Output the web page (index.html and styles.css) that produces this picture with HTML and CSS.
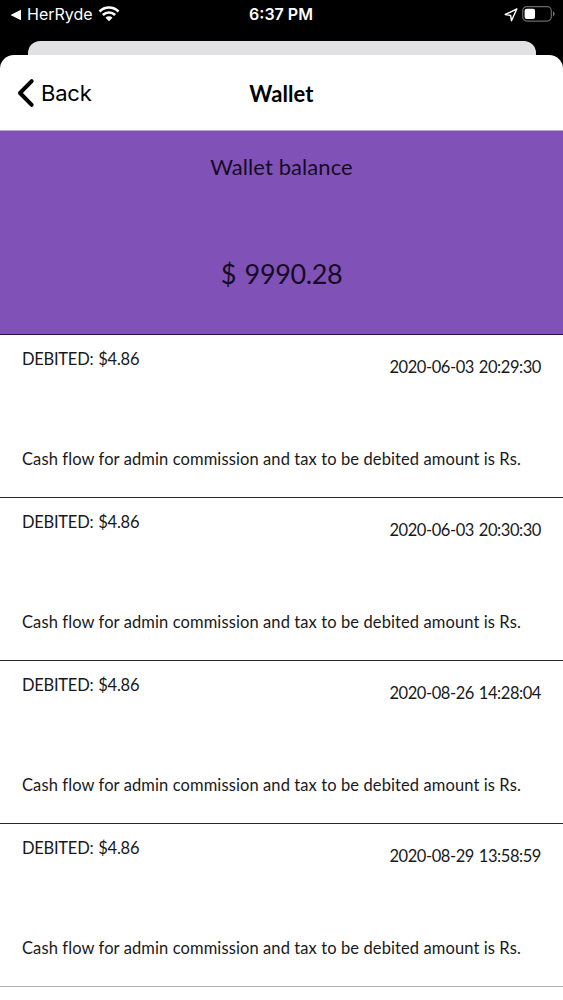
FILE: index.html
```html
<!DOCTYPE html>
<html lang="en">
<head>
<meta charset="utf-8">
<title>Wallet</title>
<link rel="stylesheet" href="styles.css">
</head>
<body>
<div class="screen">
  <header class="status">
    <div class="status-left">
      <svg class="return" width="12" height="12" viewBox="0 0 12 12"><path d="M.5 6 11 .7v10.600z" fill="#fff"/></svg>
      <span class="app">HerRyde</span>
      <svg class="wifi" width="22" height="17" viewBox="0 0 22 17"><path d="M1.500 6.500a13.400 13.400 0 0 1 19 0M4.900 10a8.600 8.600 0 0 1 12.200 0" fill="none" stroke="#fff" stroke-width="2.600"/><path d="M7.500 12.700a5 5 0 0 1 7 0L11 16.200z" fill="#fff"/></svg>
    </div>
    <span class="time">6:37 PM</span>
    <div class="status-right">
      <svg class="location" width="14" height="14" viewBox="0 0 14 14"><path d="M12.800 1 1.200 6.500l5.400.9.900 5.300z" fill="none" stroke="#fff" stroke-width="1.400" stroke-linejoin="round"/></svg>
      <svg class="battery" width="33" height="16" viewBox="0 0 33 16"><rect x=".7" y=".7" width="28.600" height="14.400" rx="4" fill="none" stroke="#69696c" stroke-width="1.200"/><rect x="2.600" y="2.800" width="10.400" height="10.200" rx="2" fill="#fff"/><path d="M31 5.200c2 .8 2 4.600 0 5.400z" fill="#77777a"/></svg>
    </div>
  </header>
  <div class="back-sheet"></div>
  <main class="sheet">
    <nav class="nav">
      <div class="back"><svg width="18" height="30" viewBox="0 0 18 30"><path d="M14.700 3.200 3 15l11.700 11.800" fill="none" stroke="#000" stroke-width="4" stroke-linecap="round" stroke-linejoin="round"/></svg><span class="back-label">Back</span></div>
      <h1 class="title">Wallet</h1>
    </nav>
    <section class="balance">
      <div class="balance-label">Wallet balance</div>
      <div class="amount">$ 9990.28</div>
    </section>
    <article class="entry"><div class="row"><span class="kind">DEBITED: $4.86</span><time class="date">2020-06-03 20:29:30</time></div><p class="note">Cash flow for admin commission and tax to be debited amount is Rs.</p></article>
    <article class="entry"><div class="row"><span class="kind">DEBITED: $4.86</span><time class="date">2020-06-03 20:30:30</time></div><p class="note">Cash flow for admin commission and tax to be debited amount is Rs.</p></article>
    <article class="entry"><div class="row"><span class="kind">DEBITED: $4.86</span><time class="date">2020-08-26 14:28:04</time></div><p class="note">Cash flow for admin commission and tax to be debited amount is Rs.</p></article>
    <article class="entry last"><div class="row"><span class="kind">DEBITED: $4.86</span><time class="date">2020-08-29 13:58:59</time></div><p class="note">Cash flow for admin commission and tax to be debited amount is Rs.</p></article>
  </main>
</div>
</body>
</html>
```
FILE: styles.css
```css
* { box-sizing: border-box; margin: 0; padding: 0; }
body { background: #000; font-family: Lato, sans-serif; color: #19191b; }
svg { display: block; flex: none; }
.screen { width: 563px; height: 1000px; overflow: hidden; display: flex; flex-direction: column; background: #000; white-space: nowrap; }
.status { height: 41px; flex: none; display: grid; grid-template-columns: 1fr auto 1fr; align-items: start; color: #fff; font-family: Inter, sans-serif; font-size: 16px; line-height: 20px; padding: 5px 8px 0 10px; }
.status-left, .status-right { display: flex; }
.status-right { justify-content: flex-end; }
.return { margin: 4px 5px 0 0; }
.app, .time { margin-top: -1px; }
.wifi { margin: 0 0 0 5px; }
.time { font-weight: 600; margin-right: 3px; }
.location { margin: 3px 4px 0 0; }
.battery { margin-top: 1px; }
.back-sheet { flex: none; height: 28px; margin: 0 27px -14px 28px; border-radius: 12px 12px 0 0; background: #e1e0e2; }
.sheet { flex: 1; position: relative; background: #fff; border-radius: 14px 14px 0 0; overflow: hidden; }
.nav { height: 75px; display: grid; grid-template-columns: 1fr auto 1fr; align-items: center; padding: 0 17px; color: #000; }
.back { display: flex; align-items: center; }
.back-label { font: 22px/30px Inter, sans-serif; margin-left: 6px; letter-spacing: -.2px; }
.title { font-size: 22px; line-height: 30px; font-weight: 700; padding-top: 3px; letter-spacing: .1px; }
.balance { height: 205px; background: #8052b8; border-top: 1px solid #bfa8db; border-bottom: 1px solid #24143a; text-align: center; color: #160b24; padding-top: 21px; }
.balance-label { font-size: 22px; line-height: 30px; letter-spacing: .08px; }
.amount { font-size: 27px; line-height: 40px; margin-top: 72px; letter-spacing: -.4px; word-spacing: 2px; }
.entry { height: 163px; border-bottom: 1px solid #29292b; padding: 12px 22px 0; font-size: 16.5px; line-height: 24px; }
.entry.last { border-bottom-color: #b4b4b6; }
.row { display: flex; justify-content: space-between; height: 100px; }
.kind { letter-spacing: -.25px; word-spacing: 1px; }
.date { padding-top: 8px; letter-spacing: -.43px; word-spacing: 1px; }
.note { letter-spacing: .1px; font-variant-ligatures: none; }
```
